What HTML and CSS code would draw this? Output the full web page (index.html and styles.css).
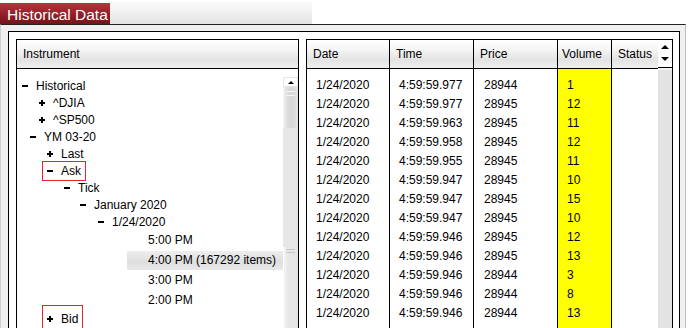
FILE: index.html
```html
<!DOCTYPE html>
<html lang="en">
<head>
  <meta charset="UTF-8" />
  <title>Historical Data</title>
  <link rel="stylesheet" href="styles.css">
</head>
<body>

  <div class="tabbar">
    <div class="tab">Historical Data</div>
    <div class="tabstrip"></div>
  </div>

  <div class="window">
    <div class="frame">

      <!-- Instrument tree -->
      <div class="panel tree-panel">
        <div class="head">Instrument</div>
        <div class="tree-body">
          <ul class="tree">
            <li class="row i-5"><span class="node"><svg class="tog" viewBox="0 0 6 6"><rect y="2" width="6" height="2"/></svg>Historical</span></li>
            <li class="row i-22"><span class="node"><svg class="tog" viewBox="0 0 6 6"><rect y="2" width="6" height="2"/><rect x="2" width="2" height="6"/></svg>^DJIA</span></li>
            <li class="row i-22"><span class="node"><svg class="tog" viewBox="0 0 6 6"><rect y="2" width="6" height="2"/><rect x="2" width="2" height="6"/></svg>^SP500</span></li>
            <li class="row i-13"><span class="node"><svg class="tog" viewBox="0 0 6 6"><rect y="2" width="6" height="2"/></svg>YM 03-20</span></li>
            <li class="row i-30"><span class="node"><svg class="tog" viewBox="0 0 6 6"><rect y="2" width="6" height="2"/><rect x="2" width="2" height="6"/></svg>Last</span></li>
            <li class="row i-30"><span class="node boxed"><svg class="tog" viewBox="0 0 6 6"><rect y="2" width="6" height="2"/></svg>Ask</span></li>
            <li class="row i-47"><span class="node"><svg class="tog" viewBox="0 0 6 6"><rect y="2" width="6" height="2"/></svg>Tick</span></li>
            <li class="row i-63"><span class="node"><svg class="tog" viewBox="0 0 6 6"><rect y="2" width="6" height="2"/></svg>January 2020</span></li>
            <li class="row i-81"><span class="node"><svg class="tog" viewBox="0 0 6 6"><rect y="2" width="6" height="2"/></svg>1/24/2020</span></li>
            <li class="row time"><span class="leaf">5:00 PM</span></li>
            <li class="row time"><span class="leaf sel">4:00 PM (167292 items)</span></li>
            <li class="row time"><span class="leaf">3:00 PM</span></li>
            <li class="row time"><span class="leaf">2:00 PM</span></li>
            <li class="row i-30 last"><span class="node boxed tall"><svg class="tog" viewBox="0 0 6 6"><rect y="2" width="6" height="2"/><rect x="2" width="2" height="6"/></svg>Bid</span></li>
          </ul>
          <div class="vscroll">
            <div class="sb-btn"><span class="tri-up small"></span></div>
            <div class="sb-thumb"></div>
            <div class="sb-track"></div>
            <div class="sb-thumb rest"></div>
          </div>
        </div>
      </div>

      <!-- Tick data -->
      <div class="panel grid-panel">
        <div class="cols">
          <div class="col c-date">
            <div class="head">Date</div>
            <div class="cells">
              <div>1/24/2020</div><div>1/24/2020</div><div>1/24/2020</div><div>1/24/2020</div>
              <div>1/24/2020</div><div>1/24/2020</div><div>1/24/2020</div><div>1/24/2020</div>
              <div>1/24/2020</div><div>1/24/2020</div><div>1/24/2020</div><div>1/24/2020</div>
              <div>1/24/2020</div>
            </div>
          </div>
          <div class="col c-time">
            <div class="head">Time</div>
            <div class="cells">
              <div>4:59:59.977</div><div>4:59:59.977</div><div>4:59:59.963</div><div>4:59:59.958</div>
              <div>4:59:59.955</div><div>4:59:59.947</div><div>4:59:59.947</div><div>4:59:59.947</div>
              <div>4:59:59.946</div><div>4:59:59.946</div><div>4:59:59.946</div><div>4:59:59.946</div>
              <div>4:59:59.946</div>
            </div>
          </div>
          <div class="col c-price">
            <div class="head">Price</div>
            <div class="cells">
              <div>28944</div><div>28945</div><div>28945</div><div>28945</div>
              <div>28945</div><div>28945</div><div>28945</div><div>28945</div>
              <div>28945</div><div>28945</div><div>28944</div><div>28944</div>
              <div>28944</div>
            </div>
          </div>
          <div class="col c-vol">
            <div class="head">Volume</div>
            <div class="cells">
              <div>1</div><div>12</div><div>11</div><div>12</div>
              <div>11</div><div>10</div><div>15</div><div>10</div>
              <div>12</div><div>13</div><div>3</div><div>8</div>
              <div>13</div>
            </div>
          </div>
          <div class="col c-status">
            <div class="head">Status</div>
            <div class="cells"></div>
          </div>
          <div class="col c-scroll">
            <div class="sb-head">
              <span class="tri-up"></span>
              <span class="tri-down"></span>
            </div>
            <div class="sb-body"></div>
          </div>
        </div>
      </div>

    </div>
  </div>

</body>
</html>
```

FILE: styles.css
```css
body {
  margin: 0;
  width: 688px;
  height: 328px;
  overflow: hidden;
  background: #fff;
  color: #000;
  font-family: "Liberation Sans", Arial, sans-serif;
  font-size: 12px;
}

/* Tab strip */
.tabbar {
  display: flex;
  height: 24px;
}

.tab {
  width: 110px;
  margin-top: 3px;
  padding: 3px 0 0 7px;
  box-sizing: border-box;
  color: #fff;
  font-size: 15.5px;
  line-height: 18px;
  background: linear-gradient(#b3353b, #95222a 50%, #761318);
}

.tabstrip {
  width: 202px;
  margin-top: 2px;
  background: linear-gradient(#fbfbfb, #e4e4e4);
}

/* Window body */
.window {
  width: 686px;
  box-sizing: border-box;
  padding: 6px 5px 0 7px;
  border-top: 1px solid #222;
  border-left: 1px solid #cfcfcf;
  border-right: 1px solid #bdbdbd;
  background: #f0f0f0;
}

.frame {
  display: flex;
  gap: 7px;
  height: 300px;
  padding: 7px 6px 0 7px;
  border: 1px solid #000;
  background: #fff;
}

.panel {
  display: flex;
  flex-direction: column;
  border: 1px solid #000;
  border-bottom: none;
}

.tree-panel {
  width: 281px;
}

.grid-panel {
  width: 365px;
}

.head {
  height: 28px;
  line-height: 28px;
  padding-left: 6px;
  border-bottom: 1px solid #000;
  background: linear-gradient(#ffffff, #f5f5f5 35%, #e3e3e3 70%, #efefef);
  white-space: nowrap;
}

/* Tree */
.tree-body {
  display: flex;
  flex: 1;
}

.tree {
  flex: 1;
  margin: 0;
  padding: 8px 0 0;
  list-style: none;
}

.row {
  display: flex;
  align-items: center;
  height: 17px;
}

.row.time {
  height: 20px;
  padding-left: 110px;
}

.row.last {
  height: 18px;
}

.i-5 { padding-left: 5px; }
.i-13 { padding-left: 13px; }
.i-22 { padding-left: 22px; }
.i-30 { padding-left: 30px; }
.i-47 { padding-left: 47px; }
.i-63 { padding-left: 63px; }
.i-81 { padding-left: 81px; }

.node {
  display: inline-flex;
  align-items: center;
  gap: 8px;
  white-space: nowrap;
}

.tog {
  width: 6px;
  height: 6px;
  fill: #000;
}

/* red selection marker around Ask / Bid */
.boxed {
  padding: 2px 4px;
  margin: -2px -4px;
  box-shadow: 0 0 0 1px #e3262b;
}

.boxed.tall {
  padding-top: 6px;
  margin-top: -6px;
}

.leaf {
  flex: 1;
  height: 19px;
  line-height: 19px;
  padding-left: 21px;
  white-space: nowrap;
}

.leaf.sel {
  background: linear-gradient(#eeeeee, #dedede 60%, #e9e9e9);
}

/* Left scrollbar */
.vscroll {
  display: flex;
  flex-direction: column;
  width: 15px;
  margin-top: 8px;
}

.sb-btn {
  display: flex;
  align-items: center;
  justify-content: center;
  height: 10px;
  background: #fff;
  border: 1px solid #e6e6e6;
  box-sizing: border-box;
}

.sb-thumb {
  height: 41px;
  box-sizing: border-box;
  border-left: 1px solid #f8f8f8;
  background: linear-gradient(to right, #ececec, #d9d9d9 35%, #d9d9d9 70%, #e6e6e6);
}

.sb-thumb::before {
  content: "";
  display: block;
  width: 9px;
  height: 3px;
  margin: 4px 0 0 2px;
  border-top: 1px solid #f6f6f6;
  border-bottom: 1px solid #f6f6f6;
}

.sb-thumb.rest {
  flex: 1;
  border-left: 1px solid #fff;
  background: linear-gradient(to right, #f4f4f4, #e6e6e6 30%, #e6e6e6);
}

.sb-thumb.rest::before {
  border-color: #c8c8c8;
  margin-top: 2px;
  height: 2px;
}

.sb-track {
  height: 119px;
  background: #e6e6e6;
}

.tri-up,
.tri-down {
  width: 0;
  height: 0;
  border-left: 4px solid transparent;
  border-right: 4px solid transparent;
}

.tri-up {
  border-bottom: 4px solid #000;
}

.tri-down {
  border-top: 4px solid #000;
}

.tri-up.small {
  border-left-width: 3px;
  border-right-width: 3px;
  border-bottom-width: 3px;
}

/* Data grid */
.cols {
  display: flex;
  flex: 1;
}

.col {
  display: flex;
  flex-direction: column;
  box-sizing: border-box;
  border-right: 1px solid #000;
}

.c-date { width: 83px; }
.c-time { width: 84px; }
.c-price { width: 84px; }
.c-vol { width: 54px; }
.c-vol .head { padding-left: 4px; }

.c-status {
  width: 46px;
  border-right: none;
}

.cells {
  flex: 1;
  padding: 7px 0 0 9px;
  line-height: 19px;
  white-space: nowrap;
}

.c-price .cells { padding-left: 10px; }

.c-vol .cells {
  background: #ffff00;
}

.c-scroll {
  width: 14px;
  border-right: none;
}

.sb-head {
  display: flex;
  flex-direction: column;
  align-items: center;
  justify-content: space-between;
  height: 28px;
  padding: 5px 0 6px;
  box-sizing: border-box;
  border-bottom: 1px solid #000;
  background: #fff;
}

.sb-body {
  flex: 1;
  border-top: 2px solid #f2f2f2;
  background: #e3e3e3;
}
```
